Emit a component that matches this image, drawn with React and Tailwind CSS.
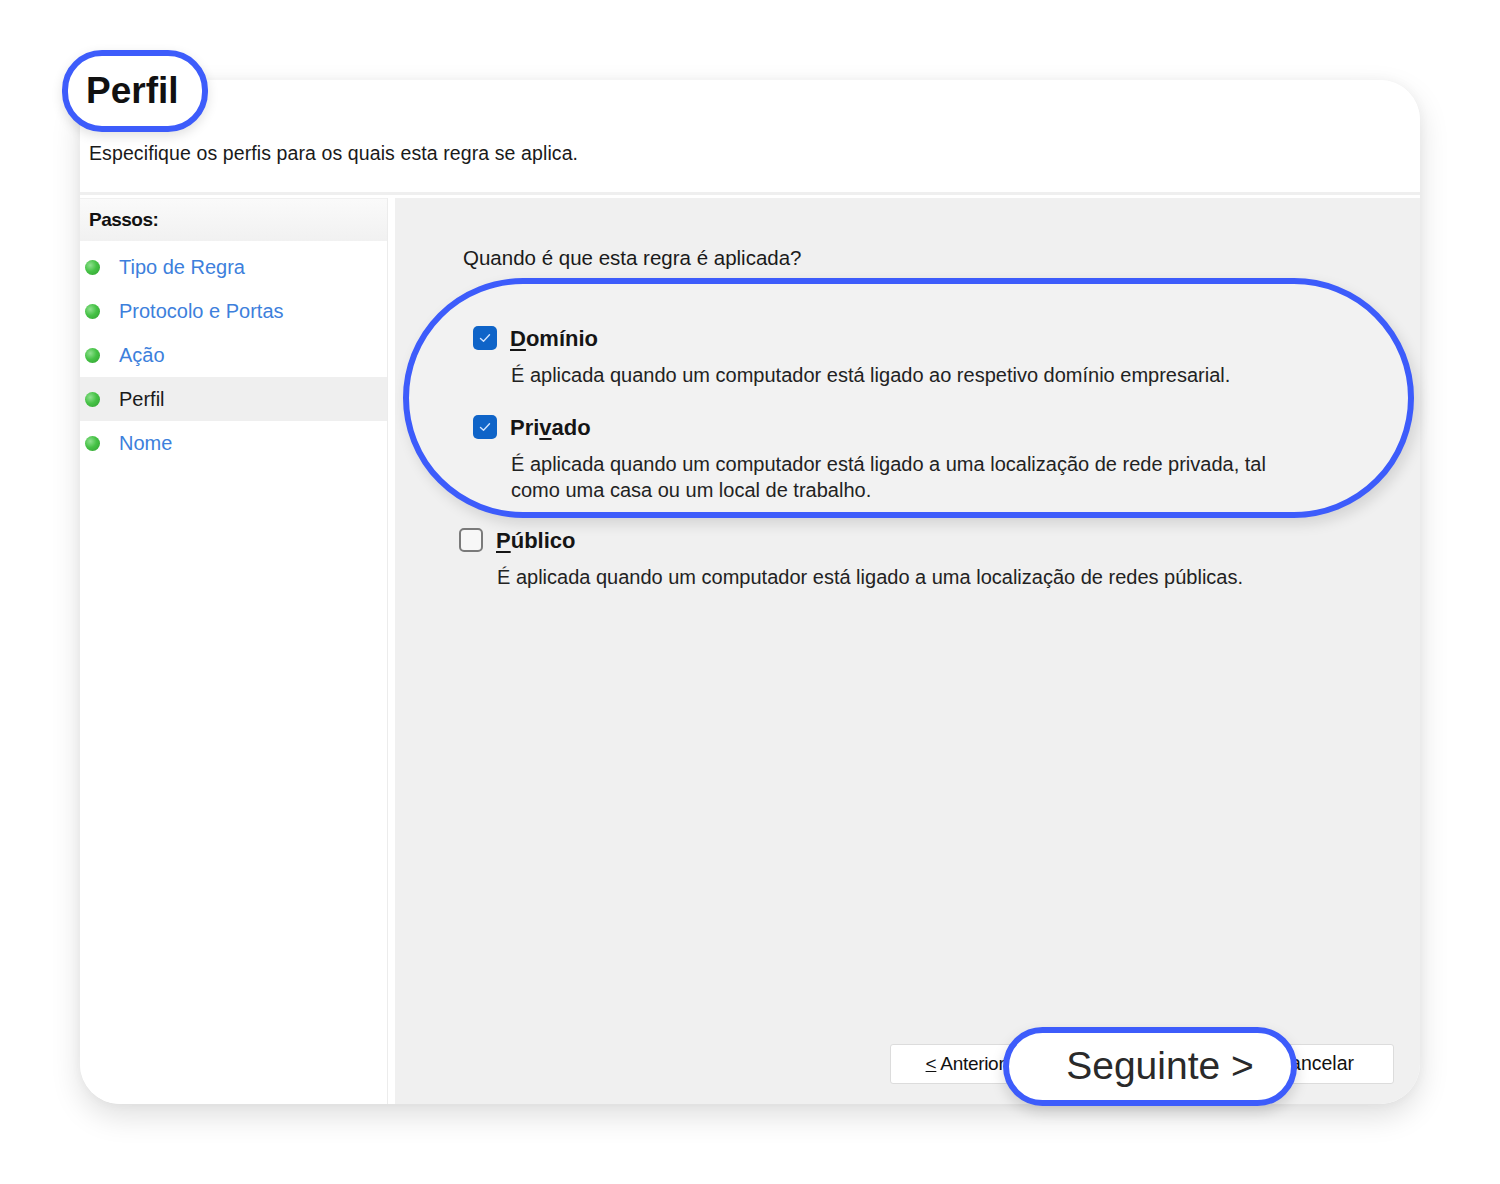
import React from "react";

const BLUE = "border-[#3d5cfb]";

function Dot() {
  return (
    <span className="inline-block w-[15px] h-[15px] rounded-full bg-[radial-gradient(circle_at_35%_35%,#8fe08f_0%,#46c246_45%,#2f9f2f_100%)]" />
  );
}

function Check({ checked }) {
  if (checked) {
    return (
      <span className="flex items-center justify-center w-[24px] h-[24px] rounded-[5px] bg-[#0f64c8] shrink-0">
        <svg width="14" height="14" viewBox="0 0 14 14" fill="none">
          <path d="M2.5 7.5 L5.5 10.2 L11.5 3.8" stroke="#cfe3ff" strokeWidth="1.4" strokeLinecap="round" strokeLinejoin="round" />
        </svg>
      </span>
    );
  }
  return <span className="block w-[24px] h-[24px] rounded-[5px] border-2 border-[#7a7a7a] bg-[#f7f7f7] shrink-0" />;
}

function Option({ checked, label, desc }) {
  return (
    <div className="flex flex-col">
      <div className="flex items-center gap-[13px] h-[24px]">
        <Check checked={checked} />
        <span className="text-[22px] font-bold text-[#151515]">{label}</span>
      </div>
      <div className="pl-[38px] mt-[12px] text-[20px] leading-[26px] text-[#222]">{desc}</div>
    </div>
  );
}

export default function App() {
  const steps = [
    { t: "Tipo de Regra", link: true },
    { t: "Protocolo e Portas", link: true },
    { t: "Ação", link: true },
    { t: "Perfil", link: false },
    { t: "Nome", link: true },
  ];
  return (
    <div className="w-[1500px] h-[1184px] bg-white pt-[80px] pl-[80px] font-['Liberation_Sans',Arial,sans-serif]">
      <div className="relative w-[1340px] h-[1024px] rounded-[40px] bg-white shadow-[0_12px_30px_rgba(0,0,0,0.13),0_0_12px_rgba(0,0,0,0.04)] flex flex-col">
        {/* title pill */}
        <div className={`absolute left-[-18px] top-[-30px] w-[146px] h-[82px] rounded-[40px] border-[6px] ${BLUE} bg-white flex items-center pl-[18px] shadow-[0_4px_12px_rgba(0,0,0,0.12)] z-10`}>
          <span className="text-[37px] font-bold text-[#111]">Perfil</span>
        </div>
        {/* header */}
        <div className="h-[112px] rounded-t-[40px] bg-white flex items-end pl-[9px] pb-[24px]">
          <span className="text-[19.5px] text-[#1a1a1a] tracking-[0.1px]">Especifique os perfis para os quais esta regra se aplica.</span>
        </div>
        <div className="h-[3px] bg-[#efefef]" />
        <div className="h-[3px] bg-white" />
        {/* body */}
        <div className="flex-1 flex">
          <div className="w-[308px] bg-white flex flex-col border-r border-[#ececec] rounded-bl-[40px]">
            <div className="h-[43px] flex items-center pl-[9px] bg-[linear-gradient(#fafafa,#f1f1f1)] border-t border-[#f0f0f0]">
              <span className="text-[19px] font-bold text-[#111] tracking-[-0.5px]">Passos:</span>
            </div>
            <div className="flex flex-col pt-[4px]">
              {steps.map((s) => (
                <div key={s.t} className={`h-[44px] flex items-center pl-[5px] gap-[19px] ${s.link ? "" : "bg-[#efefef]"}`}>
                  <Dot />
                  <span className={`text-[20px] ${s.link ? "text-[#3d7fdc]" : "text-[#1a1a1a]"}`}>{s.t}</span>
                </div>
              ))}
            </div>
          </div>
          <div className="w-[7px] bg-white" />
          <div className="flex-1 relative bg-[#f0f0f0] flex flex-col pl-[68px] pr-[6px] rounded-br-[40px]">
            <div className="mt-[48px] text-[20.5px] text-[#1a1a1a] leading-[24px]">Quando é que esta regra é aplicada?</div>
            <div className={`mt-[8px] ml-[-60px] h-[240px] rounded-[120px] border-[6px] ${BLUE} bg-[#f2f2f2] shadow-[4px_6px_14px_rgba(0,0,0,0.12)] flex flex-col pl-[64px] pt-[42px] gap-[27px]`}>
              <Option
                checked
                label={<><span className="underline underline-offset-[3px]">D</span>omínio</>}
                desc="É aplicada quando um computador está ligado ao respetivo domínio empresarial."
              />
              <Option
                checked
                label={<>Pri<span className="underline underline-offset-[3px]">v</span>ado</>}
                desc={<>É aplicada quando um computador está ligado a uma localização de rede privada, tal<br />como uma casa ou um local de trabalho.</>}
              />
            </div>
            <div className="mt-[10px] ml-[-4px]">
              <Option
                checked={false}
                label={<><span className="underline underline-offset-[3px]">P</span>úblico</>}
                desc="É aplicada quando um computador está ligado a uma localização de redes públicas."
              />
            </div>
            <div className="flex-1" />
            <div className="flex justify-end pb-[20px] pr-[20px]">
              <button className="w-[150px] h-[40px] bg-white border border-[#dcdcdc] rounded-[3px] text-[19px] text-[#111] tracking-[-0.3px]">
                <span className="underline">&lt;</span> Anterior
              </button>
              <button className="w-[150px] h-[40px] bg-white border border-[#dcdcdc] rounded-[3px] text-[19px] text-[#111] opacity-0">
                Seguinte
              </button>
              <button className="ml-[54px] w-[150px] h-[40px] bg-white border border-[#dcdcdc] rounded-[3px] text-[19.5px] text-[#111] pr-[8px]">
                Cancelar
              </button>
            </div>
            {/* Seguinte pill */}
            <div className={`absolute left-[608px] bottom-[-2px] w-[294px] h-[79px] rounded-[40px] border-[6px] ${BLUE} bg-white flex items-center justify-center pl-[20px] shadow-[0_6px_14px_rgba(0,0,0,0.15)]`}>
              <span className="text-[39px] text-[#2a2a2a]">Seguinte &gt;</span>
            </div>
          </div>
        </div>
      </div>
    </div>
  );
}
